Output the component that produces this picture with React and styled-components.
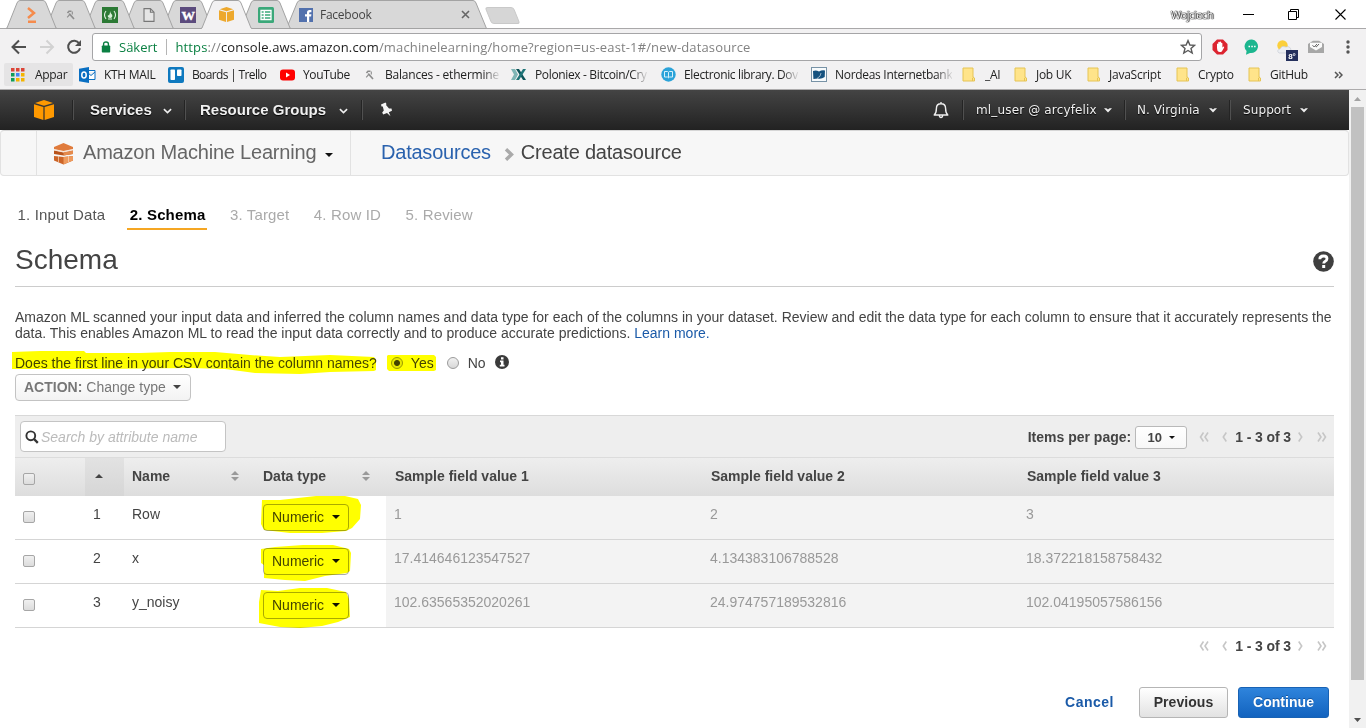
import React from "react";
import styled, { createGlobalStyle, css } from "styled-components";

const GlobalStyle = createGlobalStyle`
  * { box-sizing: border-box; }
  html, body { margin: 0; padding: 0; overflow: hidden; background: #fff; }
  body { font-family: "Liberation Sans", Arial, sans-serif; font-size: 14px; color: #444; }
`;

const uiFont = css`
  font-family: "Open Sans", "Noto Sans", sans-serif;
`;

const Screen = styled.div`
  width: 1366px;
  height: 728px;
  display: flex;
  flex-direction: column;
  overflow: hidden;
`;

/* ---------- Browser tab strip ---------- */
const TabStrip = styled.div`
  ${uiFont}
  height: 29px;
  flex: none;
  display: flex;
  align-items: flex-end;
  padding-left: 6px;
  background: #fff;
  box-shadow: inset 0 -1px #a9a8a9;
`;

const TabBox = styled.div`
  position: relative;
  z-index: ${(p) => (p.$active ? 10 : p.$z)};
  flex: none;
  width: ${(p) => p.$w}px;
  height: 29px;
  margin-right: -12px;
  display: flex;
  align-items: center;
  justify-content: center;
  font-size: 12px;
  color: #444;
`;

const WideTab = styled(TabBox)`
  margin: 0 0 0 7px;
  justify-content: flex-start;
  padding-left: 13px;
`;

const TabShape = styled.svg`
  position: absolute;
  inset: 0;
`;

const TabContent = styled.div`
  position: relative;
  display: flex;
  align-items: center;
  gap: 7px;
  width: ${(p) => (p.$wide ? "171px" : "auto")};
  height: 28px;
  letter-spacing: -0.25px;
`;

const TabClose = styled.svg`
  margin-left: auto;
`;

function Tab({ w = 51, active, z, children }) {
  return (
    <TabBox $w={w} $active={active} $z={z}>
      <TabShape width={w} height="29" viewBox={`0 0 ${w} 29`}>
        <path
          d={`M0 29 L1 28 L11 3 Q12 .5 14 .5 H${w - 14} Q${w - 12} .5 ${w - 11} 3 L${w - 1} 28 L${w} 29Z`}
          fill={active ? "#f2f1f2" : "#d8d8d8"}
        />
        <path
          d={`M0 28.5 L1 28 L11 3 Q12 .5 14 .5 H${w - 14} Q${w - 12} .5 ${w - 11} 3 L${w - 1} 28 L${w} 28.5${active ? "" : "Z"}`}
          fill="none"
          stroke="#a3a3a3"
        />
      </TabShape>
      <TabContent>{children}</TabContent>
    </TabBox>
  );
}

const NewTab = styled.div`
  width: 29px;
  height: 17px;
  margin: 0 0 5px 1px;
  background: #d6d6d6;
  border: 1px solid #c9c9c9;
  border-radius: 3px;
  transform: skewX(22deg);
`;

const WindowControls = styled.div`
  margin-left: auto;
  height: 28px;
  display: flex;
  align-items: center;
  padding: 0 20px 2px 0;
`;

const ProfileName = styled.span`
  font-size: 11px;
  letter-spacing: -0.45px;
  color: #fff;
  text-shadow: 0 0 1px #222, 0 0 1px #222, 0 0 1px #222, 1px 0 1px #444;
  margin-right: 30px;
`;

const ControlIcon = styled.svg`
  margin-right: ${(p) => p.$gap || 0}px;
`;

/* ---------- Toolbar ---------- */
const Toolbar = styled.div`
  ${uiFont}
  height: 34px;
  flex: none;
  display: flex;
  align-items: center;
  background: #f2f1f2;
  padding: 1px 0 0 10px;
`;

const NavIcons = styled.div`
  display: flex;
  width: 82px;
  gap: 10px;
  align-items: center;
`;

const Omnibox = styled.div`
  width: 1110px;
  height: 28px;
  border: 1px solid #a5a5a7;
  border-radius: 3px;
  background: #fff;
  display: flex;
  align-items: center;
  padding-left: 8px;
  font-size: 13px;
`;

const Secure = styled.span`
  color: #0b8043;
`;

const OmniDivider = styled.span`
  width: 1px;
  height: 16px;
  background: #b5b5b5;
  margin: 0 8px 0 9px;
`;

const Url = styled.span`
  color: #828282;
  letter-spacing: 0.145px;
  b { font-weight: 400; color: #1c1c1c; }
`;

const StarIcon = styled.svg`
  margin: 0 5px 0 auto;
`;

const Extensions = styled.div`
  display: flex;
  align-items: center;
  padding-left: 10px;
`;

const ExtIcon = styled.svg`
  margin-right: ${(p) => p.$gap}px;
`;

/* ---------- Bookmarks ---------- */
const Bookmarks = styled.div`
  ${uiFont}
  height: 27px;
  flex: none;
  background: #f2f1f2;
  border-bottom: 1px solid #adabac;
  display: flex;
  align-items: center;
  padding: 0 0 3px 4px;
  font-size: 12px;
  color: #222;
`;

const Bookmark = styled.div`
  flex: none;
  width: ${(p) => p.$w}px;
  height: 23px;
  display: flex;
  align-items: center;
`;

const AppsButton = styled(Bookmark)`
  background: #e5e4e5;
  padding-left: 7px;
  margin-right: 6px;
  border-radius: 2px;
`;

const BookmarkLabel = styled.span`
  margin-left: ${(p) => p.$gap ?? 8}px;
  white-space: nowrap;
  letter-spacing: ${(p) => p.$ls ?? -0.35}px;
  ${(p) => p.$fade && css`mask-image: linear-gradient(90deg, #000 86%, rgba(0, 0, 0, 0.1) 100%);`}
`;

/* ---------- Console frame ---------- */
const Viewport = styled.div`
  flex: 1;
  display: flex;
  min-height: 0;
`;

const Page = styled.div`
  width: 1349px;
  display: flex;
  flex-direction: column;
`;

const ScrollTrack = styled.div`
  width: 17px;
  background: #f1f1f1;
  display: flex;
  flex-direction: column;
  align-items: center;
`;

const ScrollButton = styled.div`
  height: 17px;
  display: flex;
  align-items: center;
  justify-content: center;
`;

const ScrollThumb = styled.div`
  width: 13px;
  height: 573px;
  background: #c1c1c1;
  margin-bottom: auto;
`;

const ConsoleBar = styled.header`
  height: 40px;
  flex: none;
  display: flex;
  align-items: center;
  background: linear-gradient(#444 0%, #222 100%);
  color: #f0f0f0;
`;

const NavDivider = styled.span`
  width: 2px;
  height: 20px;
  background: #242424;
  border-right: 1px solid #505050;
`;

const NavItem = styled.div`
  width: ${(p) => p.$w}px;
  padding-left: ${(p) => p.$pl}px;
  display: flex;
  align-items: center;
  gap: ${(p) => p.$gap}px;
  white-space: nowrap;
  text-shadow: 0 1px 1px #000;
  font: ${(p) => (p.$small ? '12px "DejaVu Sans", Verdana, sans-serif' : 'bold 15px "Liberation Sans", Arial, sans-serif')};
  letter-spacing: ${(p) => p.$ls || 0}px;
  margin-top: ${(p) => (p.$small ? 0 : -1)}px;
`;

const NavSpacer = styled.div`
  flex: 1;
`;

const ServiceBar = styled.nav`
  height: 46px;
  flex: none;
  display: flex;
  background: #f7f7f7;
  border: 1px solid #e2e2e2;
  border-top-color: #d6d6d6;
  border-radius: 4px;
  font-size: 20px;
  line-height: 43px;
`;

const ServiceGutter = styled.div`
  width: 36px;
  border-right: 1px solid #e2e2e2;
`;

const ServiceName = styled.div`
  width: 314px;
  border-right: 1px solid #e2e2e2;
  display: flex;
  align-items: center;
  color: #666;
  padding-left: 16px;
`;

const ServiceLabel = styled.span`
  margin: 0 9px 2px 9px;
  letter-spacing: -0.2px;
`;

const Crumbs = styled.div`
  display: flex;
  align-items: center;
  padding: 0 0 2px 30px;
  letter-spacing: -0.22px;
`;

const CrumbLink = styled.a`
  color: #2a62ae;
`;

const CrumbArrow = styled.svg`
  margin: 4px 6px 0 13px;
`;

/* ---------- Content ---------- */
const Content = styled.main`
  position: relative;
  flex: 1;
  padding: 29px 15px 0 15px;
  display: flex;
  flex-direction: column;
`;

const Steps = styled.div`
  display: flex;
  gap: 20px;
  height: 25px;
  font-size: 15px;
`;

const Step = styled.span`
  height: 25px;
  padding: 1px 2px 0 2.5px;
  letter-spacing: 0.15px;
  color: ${(p) => (p.$active ? "#000" : p.$done ? "#555" : "#aaa")};
  font-weight: ${(p) => (p.$active ? 700 : 400)};
  border-bottom: 2px solid ${(p) => (p.$active ? "#f5a623" : "transparent")};
`;

const TitleRow = styled.div`
  height: 57px;
  flex: none;
  display: flex;
  align-items: center;
  justify-content: space-between;
  border-bottom: 1px solid #ccc;
`;

const Title = styled.h1`
  margin: 3px 0 0;
  font-size: 28px;
  font-weight: 400;
  line-height: 32px;
`;

const HelpIcon = styled.svg`
  margin-top: 6px;
`;

const Intro = styled.p`
  margin: 22px -10px 0 0;
  line-height: 16px;
  white-space: nowrap;
  letter-spacing: 0.005px;
`;

const Link = styled.a`
  color: #1a5aa8;
`;

const Question = styled.div`
  display: flex;
  align-items: center;
  height: 16px;
  margin-top: 14px;
`;

const Radio = styled.span`
  width: 12px;
  height: 12px;
  border-radius: 50%;
  border: 1px solid #9b9b9b;
  background: ${(p) => (p.$on ? "radial-gradient(circle, #444 0 2.5px, #e8e8e8 3.5px)" : "linear-gradient(#f1f1f1, #d8d8d8)")};
  margin: 0 ${(p) => (p.$on ? 8 : 9)}px 0 ${(p) => (p.$on ? 14 : 13)}px;
`;

const InfoIcon = styled.svg`
  margin: -2px 0 0 9px;
`;

const ActionButton = styled.div`
  width: 176px;
  height: 27px;
  flex: none;
  margin-top: 3px;
  border: 1px solid #c3c3c3;
  border-radius: 4px;
  background: linear-gradient(#fff, #f3f3f3);
  color: #777;
  display: flex;
  align-items: center;
  padding: 0 0 2px 8px;
  gap: 4px;
  white-space: nowrap;
`;

const Caret = styled.span`
  width: 0;
  height: 0;
  border: ${(p) => p.$s || 4}px solid transparent;
  border-top-color: ${(p) => p.$c || "#111"};
  border-bottom: 0;
  margin-left: ${(p) => p.$ml || 0}px;
  margin-top: ${(p) => p.$mt || 0}px;
`;

const Grid = styled.section`
  margin-top: 14px;
  border-top: 1px solid #d8d8d8;
  width: 1319px;
`;

const GridToolbar = styled.div`
  height: 41px;
  background: #eee;
  display: flex;
  align-items: center;
  padding: 0 7px 0 5px;
  font-weight: 700;
`;

const Search = styled.div`
  width: 206px;
  height: 31px;
  border: 1px solid #c4c4c4;
  border-radius: 4px;
  background: #fff;
  display: flex;
  align-items: center;
  padding-left: 4px;
  gap: 2px;
  color: #bbb;
  font-weight: 400;
  font-style: italic;
  margin-right: auto;
`;

const PageSize = styled.div`
  width: 52px;
  height: 23px;
  margin: 1px 12px 0 4px;
  border: 1px solid #b9b9b9;
  border-radius: 3px;
  background: linear-gradient(#fff, #f7f7f7);
  display: flex;
  align-items: center;
  justify-content: center;
  gap: 7px;
  font-size: 13px;
`;

const Pager = styled.div`
  display: flex;
  align-items: center;
  justify-content: flex-end;
  font-weight: 700;
  color: #444;
  height: 18px;
  margin-top: ${(p) => p.$mt || 0}px;
  padding-right: ${(p) => p.$pr || 0}px;
`;

const PagerText = styled.span`
  margin: 0 7px 0 8px;
  letter-spacing: -0.1px;
`;

const rowGrid = css`
  display: grid;
  grid-template-columns: 70px 39px 131px 131px 1fr 1fr 1fr;
`;

const HeaderRow = styled.div`
  ${rowGrid}
  height: 39px;
  border-top: 1px solid #dcdcdc;
  background: linear-gradient(#eee, #ddd);
  font-weight: 700;
`;

const HeaderCell = styled.div`
  display: flex;
  align-items: center;
  justify-content: ${(p) => (p.$sort ? "space-between" : "flex-start")};
  padding: 0 ${(p) => (p.$sort ? "16px 2px 8px" : "8px 2px 9px")};
`;

const SortedCell = styled.div`
  background: linear-gradient(#e2e2e2, #d6d6d6);
  display: flex;
  align-items: center;
  padding: 0 0 2px 10px;
`;

const BodyRow = styled.div`
  ${rowGrid}
  height: 44px;
  border-bottom: 1px solid #d5d5d5;
  line-height: 16px;
`;

const Cell = styled.div`
  padding: 10px 0 0 8px;
  color: ${(p) => (p.$sample ? "#999" : "#444")};
  background: ${(p) => (p.$sample ? "#f3f3f3" : "transparent")};
`;

const CheckCell = styled.div`
  padding: 15px 0 0 8px;
`;

const Checkbox = styled.span`
  display: block;
  width: 12px;
  height: 12px;
  border: 1px solid #a6a6a6;
  border-radius: 2px;
  background: linear-gradient(#f0f0f0, #dcdcdc);
`;

const TypeSelect = styled.div`
  width: 86px;
  height: 27px;
  margin-top: -2px;
  border: 1px solid #aaa;
  border-radius: 4px;
  display: flex;
  align-items: center;
  padding: 0 0 1px 8px;
  gap: 8px;
`;

const Footer = styled.div`
  display: flex;
  justify-content: flex-end;
  align-items: center;
  margin-top: 32px;
  padding-right: 5px;
  font-weight: 700;
`;

const CancelLink = styled.a`
  color: #1a5aa8;
  letter-spacing: 0.5px;
  margin: 0 25px 2px 0;
`;

const Button = styled.div`
  width: ${(p) => p.$w}px;
  height: 31px;
  border-radius: 3px;
  display: flex;
  align-items: center;
  justify-content: center;
  padding-bottom: 1px;
  letter-spacing: 0.05px;
  ${(p) =>
    p.$primary
      ? css`
          margin-left: 10px;
          border: 1px solid #1862b4;
          background: linear-gradient(#2f84dc, #1263bf);
          color: #fff;
          text-shadow: 0 -1px #1556a0;
        `
      : css`
          border: 1px solid #b5b5b5;
          background: linear-gradient(#fff, #e2e2e2);
          color: #333;
        `}
`;

/* Marker strokes lie over the text like a real highlighter. */
const Highlights = styled.svg`
  position: absolute;
  left: 0;
  top: 0;
  mix-blend-mode: multiply;
  pointer-events: none;
`;

/* ---------- Icons ---------- */
const CubeIcon = ({ size = 16, color = "#f5a623" }) => (
  <svg width={size} height={size} viewBox="0 0 20 20">
    <path d="M1 3 L10 0 L19 3 L10 5.7Z" fill={color} />
    <path d="M0 4.2 L9.4 7 V20 L0 17Z M20 4.2 L10.6 7 V20 L20 17Z" fill={color} />
  </svg>
);

const PickIcon = () => (
  <svg width="10" height="10" viewBox="0 0 10 10" fill="none" stroke="#8d8d8d">
    <path d="M1.5 3 L3 1.2 H5.5" strokeWidth="1.6" />
    <path d="M3.2 3.6 L8 9" strokeWidth="1.6" />
    <path d="M6.3 1.4 V4.6 M1.2 7.4 L3.6 4.6" strokeWidth="1.1" />
  </svg>
);

const FolderIcon = () => (
  <svg width="14" height="15" viewBox="0 0 14 15">
    <path d="M1 1 H11 V10 L12.5 11 V14 H1Z" fill="#ffe48a" stroke="#e6c455" />
    <path d="M10.5 14 V11 L11.5 10.4" fill="none" stroke="#e6c455" />
  </svg>
);

const ChevronSvg = styled.svg`
  margin-top: 3px;
`;

const Chevron = () => (
  <ChevronSvg width="9" height="6" viewBox="0 0 10 6">
    <path d="M1 1 L5 4.7 L9 1" fill="none" stroke="#eee" strokeWidth="1.8" />
  </ChevronSvg>
);

const SmallCaret = () => (
  <svg width="8" height="5" viewBox="0 0 8 5">
    <path d="M0 .3 H2.4 L4 1.5 L5.6 .3 H8 L4 4.6Z" fill="#eee" />
  </svg>
);

const SortIcon = () => (
  <svg width="8" height="10" viewBox="0 0 8 10">
    <path d="M0 4 L4 0 L8 4Z M0 6 L4 10 L8 6Z" fill="#999" />
  </svg>
);

const Arrows = ({ double, right }) => (
  <svg
    width={double ? 10 : 5}
    height="10"
    viewBox={double ? "0 0 10 10" : "0 0 5 10"}
    fill="none"
    stroke="#c6c6c6"
    strokeWidth="1.6"
    transform={right ? "scale(-1 1)" : undefined}
  >
    <path d={double ? "M4.5 .5 L1.5 5 L4.5 9.5 M9 .5 L6 5 L9 9.5" : "M4.3 .5 L1.3 5 L4.3 9.5"} />
  </svg>
);

const PagerGap = styled.span`
  width: ${(p) => p.$w}px;
`;

function Pagination({ mt, pr }) {
  return (
    <Pager $mt={mt} $pr={pr}>
      <Arrows double />
      <PagerGap $w={13} />
      <Arrows />
      <PagerText>1 - 3 of 3</PagerText>
      <Arrows right />
      <PagerGap $w={14} />
      <Arrows double right />
    </Pager>
  );
}

const rows = [
  ["1", "Row", "1", "2", "3"],
  ["2", "x", "17.414646123547527", "4.134383106788528", "18.372218158758432"],
  ["3", "y_noisy", "102.63565352020261", "24.974757189532816", "102.04195057586156"],
];

const folders = [
  ["_AI", 52, 9, -0.3],
  ["Job UK", 73, 8, -0.3],
  ["JavaScript", 89, 8, -0.25],
  ["Crypto", 72, 8, -0.25],
  ["GitHub", 86, 8, -0.3],
];

const appColors = ["#db4437", "#db4437", "#db4437", "#0f9d58", "#4285f4", "#f4b400", "#0f9d58", "#f4b400", "#f4b400"];

function BrowserChrome() {
  return (
    <>
      <TabStrip>
        <Tab z={7}>
          <svg width="12" height="16" viewBox="0 0 12 16" fill="none" stroke="#f58b4c" strokeWidth="2.5">
            <path d="M2 1 L8 6 L2 11 M2 14.7 H10" />
          </svg>
        </Tab>
        <Tab z={6}><PickIcon /></Tab>
        <Tab z={5}>
          <svg width="16" height="16" viewBox="0 0 16 16">
            <rect width="16" height="16" fill="#2c7a35" />
            <path d="M4 4 Q1 8 4 12 M12 4 Q15 8 12 12 M6 12 H10" fill="none" stroke="#e4f3e5" strokeWidth="1.1" />
            <path d="M8 4 Q8.5 6.5 10.2 8 Q10.8 10.5 8.2 11 Q5 10.5 6 8 L7 8.4 Q8.3 6.5 8 4Z" fill="#d8efd9" />
          </svg>
        </Tab>
        <Tab z={4}>
          <svg width="12" height="14" viewBox="0 0 12 14" fill="#e5e5e5" stroke="#777" strokeWidth="1.1">
            <path d="M1 .6 H7.4 L11 4.2 V13.4 H1Z M7.4 .6 V4.2 H11" />
          </svg>
        </Tab>
        <Tab z={3}>
          <svg width="16" height="16" viewBox="0 0 16 16">
            <rect width="16" height="16" fill="#5b4b7d" />
            <text x="8" y="12.6" textAnchor="middle" fontFamily="Liberation Serif, serif" fontWeight="700" fontSize="13.5" fill="#fff" stroke="#fff" strokeWidth=".4">W</text>
          </svg>
        </Tab>
        <Tab z={2} active><CubeIcon size={15} color="#eda82c" /></Tab>
        <Tab z={1}>
          <svg width="16" height="16" viewBox="0 0 16 16">
            <rect width="16" height="16" rx="1.5" fill="#3aa879" />
            <path d="M3 3.5 H13 V12.5 H3Z M3 6.5 H13 M3 9.5 H13 M6.3 3.5 V12.5" fill="none" stroke="#fff" strokeWidth="1.3" />
          </svg>
        </Tab>
        <WideTab $w={201} $z={0}>
          <TabShape width="201" height="29" viewBox="0 0 201 29">
            <path d="M.5 28.5 L11 3 Q12 .5 14 .5 H187 Q189 .5 190 3 L200.5 28.5Z" fill="#d8d8d8" stroke="#a3a3a3" />
          </TabShape>
          <TabContent $wide>
            <svg width="14" height="14" viewBox="0 0 14 14">
              <rect width="14" height="14" fill="#5271ad" />
              <path d="M8 14 V8.6 H6 V6.2 H8 V4.6 Q8 2 10.5 2 H12.4 V4.2 H11 Q10.2 4.2 10.2 5 V6.2 H12.4 L12.1 8.6 H10.2 V14Z" fill="#fff" />
            </svg>
            Facebook
            <TabClose width="9" height="9" viewBox="0 0 9 9" stroke="#666" strokeWidth="1.6">
              <path d="M1 1 L8 8 M8 1 L1 8" />
            </TabClose>
          </TabContent>
        </WideTab>
        <NewTab />
        <WindowControls>
          <ProfileName>Wojciech</ProfileName>
          <ControlIcon $gap={34} width="11" height="11" viewBox="0 0 11 11" stroke="#000"><path d="M0 5.5 H11" /></ControlIcon>
          <ControlIcon $gap={36} width="11" height="11" viewBox="0 0 11 11" fill="none" stroke="#000">
            <path d="M.5 2.5 H8.5 V10.5 H.5Z M2.5 2.5 V.5 H10.5 V8.5 H8.5" />
          </ControlIcon>
          <ControlIcon width="11" height="11" viewBox="0 0 11 11" stroke="#000" strokeWidth="1.1"><path d="M.5 .5 L10.5 10.5 M10.5 .5 L.5 10.5" /></ControlIcon>
        </WindowControls>
      </TabStrip>

      <Toolbar>
        <NavIcons>
          <svg width="18" height="16" viewBox="0 0 18 16" fill="none" stroke="#4f4f4f" strokeWidth="2"><path d="M16 8 H3 M9 1.5 L2.5 8 L9 14.5" /></svg>
          <svg width="18" height="16" viewBox="0 0 18 16" fill="none" stroke="#d2d2d2" strokeWidth="2"><path d="M2 8 H14 M8.5 1.5 L15 8 L8.5 14.5" /></svg>
          <svg width="16" height="16" viewBox="0 0 16 16"><path d="M13.2 4.5 A6 6 0 1 0 14 9.2" fill="none" stroke="#4f4f4f" strokeWidth="2" /><path d="M15 1 V7 H9Z" fill="#4f4f4f" /></svg>
        </NavIcons>
        <Omnibox>
          <svg width="10" height="12" viewBox="0 0 10 12">
            <rect x=".8" y="4.5" width="8.4" height="7" rx=".8" fill="#0b8043" />
            <path d="M2.6 5 V3 Q2.6 1 5 1 Q7.4 1 7.4 3 V5" fill="none" stroke="#0b8043" strokeWidth="1.4" />
          </svg>
          <PagerGap $w={8} />
          <Secure>Säkert</Secure>
          <OmniDivider />
          <Url><Secure>https</Secure>://<b>console.aws.amazon.com</b>/machinelearning/home?region=us-east-1#/new-datasource</Url>
          <StarIcon width="16" height="16" viewBox="0 0 16 16" fill="none" stroke="#5a5a5a" strokeWidth="1.4">
            <path d="M8 1.6 L9.9 6 L14.6 6.3 L11 9.4 L12.2 14 L8 11.5 L3.8 14 L5 9.4 L1.4 6.3 L6.1 6Z" />
          </StarIcon>
        </Omnibox>
        <Extensions>
          <ExtIcon $gap={16} width="16" height="16" viewBox="0 0 16 16">
            <path d="M5 .5 H11 L15.5 5 V11 L11 15.5 H5 L.5 11 V5Z" fill="#dc2430" />
            <path d="M5 9 V5 Q5.6 4 6.2 5 V3.4 Q7 2.3 7.7 3.4 V2.8 Q8.5 2 9.1 3 V4 Q10 3.2 10.4 4.4 V8.6 L11.6 7.6 Q12.6 7.7 12 8.8 L9.8 12.6 Q7 14 5.4 11.5Z" fill="#fff" />
          </ExtIcon>
          <ExtIcon $gap={16} width="16" height="16" viewBox="0 0 16 16">
            <path d="M8 .5 A7 6.8 0 1 1 6 14 L2 15.8 L2.6 12 A7 6.8 0 0 1 8 .5Z" fill="#1cb68f" />
            <path d="M4.5 7.5 H6 M7.3 7.5 H8.8 M10.1 7.5 H11.6" stroke="#fff" strokeWidth="1.4" />
          </ExtIcon>
          <ExtIcon $gap={10} width="22" height="28" viewBox="0 0 22 28">
            <circle cx="6.5" cy="12.5" r="5.2" fill="#fbcf3b" />
            <path d="M3 20 Q0 17.5 4 15.8 Q6 12 10 14 Q14 12.5 15 17 V20Z" fill="#eceef2" stroke="#c3c8d0" strokeWidth=".6" />
            <rect x="10" y="17" width="12" height="11" fill="#25305d" />
            <text x="16" y="25.5" textAnchor="middle" fontSize="8" fontWeight="700" fill="#fff" fontFamily="Liberation Sans, sans-serif">8°</text>
          </ExtIcon>
          <ExtIcon $gap={22} width="16" height="14" viewBox="0 0 16 14">
            <path d="M0 4 L5 .7 H11 L16 4 V13 H0Z" fill="#a7a7a7" />
            <path d="M2 2.8 H14 V7 L8 10.5 L2 7Z" fill="#fafafa" />
            <path d="M4.5 5.2 L6.2 7 L9 4 M7.6 6.6 L8.2 7 L11 4" fill="none" stroke="#666" strokeWidth="1" />
          </ExtIcon>
          <svg width="4" height="14" viewBox="0 0 4 14" fill="#555"><circle cx="2" cy="2" r="1.7" /><circle cx="2" cy="7" r="1.7" /><circle cx="2" cy="12" r="1.7" /></svg>
        </Extensions>
      </Toolbar>

      <Bookmarks>
        <AppsButton $w={69}>
          <svg width="14" height="14" viewBox="0 0 14 14">
            {appColors.map((c, i) => <rect key={i} x={(i % 3) * 5} y={Math.floor(i / 3) * 5} width="3.5" height="3.5" fill={c} />)}
          </svg>
          <BookmarkLabel $gap={10} $ls={-0.3}>Appar</BookmarkLabel>
        </AppsButton>
        <Bookmark $w={89}>
          <svg width="17" height="16" viewBox="0 0 17 16">
            <path d="M8 3.5 H16 V12.5 H8Z M8 5 L12 8.5 L16 5" fill="#fff" stroke="#0a6fc2" />
            <path d="M0 1.8 L10 0 V16 L0 14.2Z" fill="#0a6fc2" />
            <ellipse cx="5" cy="8" rx="2.2" ry="3" fill="none" stroke="#fff" strokeWidth="1.5" />
          </svg>
          <BookmarkLabel $ls={-0.3}>KTH MAIL</BookmarkLabel>
        </Bookmark>
        <Bookmark $w={112}>
          <svg width="16" height="16" viewBox="0 0 16 16">
            <rect width="16" height="16" rx="2" fill="#0f79bf" />
            <rect x="2.5" y="2.5" width="4.5" height="10.5" rx=".8" fill="#fff" /><rect x="9" y="2.5" width="4.5" height="6.5" rx=".8" fill="#fff" />
          </svg>
          <BookmarkLabel $ls={-0.65}>Boards | Trello</BookmarkLabel>
        </Bookmark>
        <Bookmark $w={85}>
          <svg width="15" height="12" viewBox="0 0 15 12"><rect y=".5" width="15" height="11" rx="3" fill="#f00" /><path d="M6 3.6 L10 6 L6 8.4Z" fill="#fff" /></svg>
          <BookmarkLabel $ls={-0.35}>YouTube</BookmarkLabel>
        </Bookmark>
        <Bookmark $w={146}>
          <PickIcon />
          <BookmarkLabel $gap={10} $fade $ls={-0.2}>Balances - ethermine</BookmarkLabel>
        </Bookmark>
        <Bookmark $w={150}>
          <svg width="16" height="13" viewBox="0 0 16 13">
            <path d="M0 1 H4 L7 6.5 L4 12 H0 L3 6.5Z" fill="#7fb5b5" />
            <path d="M5 1 H8 L15 12 H12Z" fill="#0e5358" /><path d="M12 1 H15 L8 12 H5Z" fill="#1f7478" />
          </svg>
          <BookmarkLabel $fade>Poloniex - Bitcoin/Cry</BookmarkLabel>
        </Bookmark>
        <Bookmark $w={150}>
          <svg width="15" height="15" viewBox="0 0 15 15"><circle cx="7.5" cy="7.5" r="7.2" fill="#2ba3d9" /><path d="M3.5 4.5 H6.5 L7.5 5.3 L8.5 4.5 H11.5 V10 H8.5 L7.5 10.8 L6.5 10 H3.5Z M7.5 5.3 V10.8" fill="none" stroke="#d6f1fb" /></svg>
          <BookmarkLabel $fade>Electronic library. Dov</BookmarkLabel>
        </Bookmark>
        <Bookmark $w={151}>
          <svg width="16" height="15" viewBox="0 0 16 15"><rect x=".5" y=".5" width="15" height="14" fill="#f7fafc" stroke="#7892a6" /><path d="M2 4 Q5 2.7 8 4.5 Q11 2.8 14 3.5 L13.7 10 Q10 12.5 7 11.5 L2.4 12Z" fill="#14517f" /><path d="M6 11.5 Q10 9.5 10 6" fill="none" stroke="#c8d9e5" strokeWidth=".7" /></svg>
          <BookmarkLabel $fade $ls={-0.3}>Nordeas Internetbank</BookmarkLabel>
        </Bookmark>
        {folders.map(([name, w, gap, ls]) => (
          <Bookmark key={name} $w={w}>
            <FolderIcon />
            <BookmarkLabel $gap={gap} $ls={ls}>{name}</BookmarkLabel>
          </Bookmark>
        ))}
        <svg width="9" height="8" viewBox="0 0 9 8" fill="none" stroke="#555" strokeWidth="1.5"><path d="M1 1 L4 4 L1 7 M5 1 L8 4 L5 7" /></svg>
      </Bookmarks>
    </>
  );
}

function ConsoleHeader() {
  return (
    <>
      <ConsoleBar>
        <NavItem $w={72} $pl={34}><CubeIcon size={20} color="#ff9900" /></NavItem>
        <NavDivider />
        <NavItem $w={110} $pl={16} $gap={11}>Services<Chevron /></NavItem>
        <NavDivider />
        <NavItem $w={175} $pl={14} $gap={13} $ls={0.02}>Resource Groups<Chevron /></NavItem>
        <NavDivider />
        <NavItem $w={47} $pl={16}>
          <svg width="14" height="15" viewBox="0 0 14 15"><path d="M2 2.5 L6.5 .5 L7.5 2 L7 3 L10 6.5 L12.5 6.5 L13 8.8 L9.8 10.3 L11.5 14.3 L8 11 L4.2 12.5 L3.2 10.5 L4.8 8.6 L3.8 4.6 L2.5 4.4Z" fill="#f4f4f4" /></svg>
        </NavItem>
        <NavSpacer />
        <NavItem $w={30} $pl={0}>
          <svg width="18" height="18" viewBox="0 0 18 18" fill="none" stroke="#eee" strokeWidth="1.4" strokeLinejoin="round">
            <path d="M9 1 V2.5 M2.2 14 Q4.4 12 4.4 7.5 Q4.4 2.8 9 2.8 Q13.6 2.8 13.6 7.5 Q13.6 12 15.8 14Z M7.3 14.3 Q7.5 16.5 9 16.5 Q10.5 16.5 10.7 14.3" />
          </svg>
        </NavItem>
        <NavDivider />
        <NavItem $small $w={160} $pl={12} $gap={7} $ls={0.15}>ml_user @ arcyfelix<SmallCaret /></NavItem>
        <NavDivider />
        <NavItem $small $w={103} $pl={11} $gap={9} $ls={0.08}>N. Virginia<SmallCaret /></NavItem>
        <NavDivider />
        <NavItem $small $w={118} $pl={12} $gap={9} $ls={0.1}>Support<SmallCaret /></NavItem>
      </ConsoleBar>
      <ServiceBar>
        <ServiceGutter />
        <ServiceName>
          <svg width="21" height="23" viewBox="0 0 21 23">
            <path d="M1 5 L10.5 1 L20 5 V7 L10.5 9 L1 7Z" fill="#e07b3c" />
            <path d="M1 8.5 L10.5 10.5 L20 8.5 V12 L10.5 13.5 L1 12Z" fill="#b9541c" />
            <path d="M10.5 10.5 L20 8.5 V12 L10.5 13.5Z" fill="#e58a4c" />
            <path d="M1 14 L10.5 15 L20 14 V18.5 L10.5 22.5 L1 18.5Z" fill="#cc6427" />
            <path d="M10.5 15 L20 14 V18.5 L10.5 22.5Z" fill="#ee9a5c" />
            <path d="M5.5 14 V20.5 M15.5 14 V20.5 M1 7.8 L10.5 9.8 L20 7.8" fill="none" stroke="#f8d7bf" strokeWidth=".7" />
          </svg>
          <ServiceLabel>Amazon Machine Learning</ServiceLabel>
          <Caret $mt={4} />
        </ServiceName>
        <Crumbs>
          <CrumbLink>Datasources</CrumbLink>
          <CrumbArrow width="11" height="13" viewBox="0 0 11 13" fill="none" stroke="#aaa" strokeWidth="3.4"><path d="M2 1.2 L7.5 6.5 L2 11.8" /></CrumbArrow>
          <span>Create datasource</span>
        </Crumbs>
      </ServiceBar>
    </>
  );
}

export default function App() {
  return (
    <Screen>
      <GlobalStyle />
      <BrowserChrome />
      <Viewport>
        <Page>
          <ConsoleHeader />
          <Content>
            <Steps>
              <Step $done>1. Input Data</Step>
              <Step $active>2. Schema</Step>
              <Step>3. Target</Step>
              <Step>4. Row ID</Step>
              <Step>5. Review</Step>
            </Steps>
            <TitleRow>
              <Title>Schema</Title>
              <HelpIcon width="21" height="21" viewBox="0 0 21 21">
                <circle cx="10.5" cy="10.5" r="10.3" fill="#3f3f3f" />
                <path d="M6.8 8.2 Q6.8 5 10.5 5 Q14 5 14 7.8 Q14 9.4 12 10.4 Q10.7 11.2 10.7 12.6" fill="none" stroke="#fff" strokeWidth="2.8" />
                <rect x="9.2" y="14" width="3" height="3" fill="#fff" />
              </HelpIcon>
            </TitleRow>
            <Intro>
              Amazon ML scanned your input data and inferred the column names and data type for each of the columns in your dataset. Review and edit the data type for each column to ensure that it accurately represents the
              <br />
              data. This enables Amazon ML to read the input data correctly and to produce accurate predictions. <Link>Learn more.</Link>
            </Intro>
            <Question>
              Does the first line in your CSV contain the column names?
              <Radio $on />
              Yes
              <Radio />
              No
              <InfoIcon width="14" height="14" viewBox="0 0 14 14">
                <circle cx="7" cy="7" r="7" fill="#3a3a3a" />
                <path d="M6 2.3 H8.5 V4.5 H6Z M5 5.6 H8.5 V9.8 H9.5 V11.4 H4.8 V9.8 H6 V7.2 H5Z" fill="#fff" />
              </InfoIcon>
            </Question>
            <ActionButton>
              <b>ACTION:</b> Change type <Caret $c="#444" $ml={3} />
            </ActionButton>

            <Grid>
              <GridToolbar>
                <Search>
                  <svg width="14" height="14" viewBox="0 0 14 14" fill="none" stroke="#333"><circle cx="5.8" cy="5.8" r="4.4" strokeWidth="1.9" /><path d="M9 9 L12.8 12.8" strokeWidth="2.4" /></svg>
                  Search by attribute name
                </Search>
                Items per page:
                <PageSize>10 <Caret $s={3} /></PageSize>
                <Pagination />
              </GridToolbar>
              <HeaderRow>
                <CheckCell><Checkbox /></CheckCell>
                <SortedCell>
                  <svg width="8" height="4" viewBox="0 0 8 4"><path d="M0 4 L4 0 L8 4Z" fill="#444" /></svg>
                </SortedCell>
                <HeaderCell $sort>Name<SortIcon /></HeaderCell>
                <HeaderCell $sort>Data type<SortIcon /></HeaderCell>
                <HeaderCell>Sample field value 1</HeaderCell>
                <HeaderCell>Sample field value 2</HeaderCell>
                <HeaderCell>Sample field value 3</HeaderCell>
              </HeaderRow>
              {rows.map(([n, name, a, b, c]) => (
                <BodyRow key={n}>
                  <CheckCell><Checkbox /></CheckCell>
                  <Cell>{n}</Cell>
                  <Cell>{name}</Cell>
                  <Cell><TypeSelect>Numeric <Caret /></TypeSelect></Cell>
                  <Cell $sample>{a}</Cell>
                  <Cell $sample>{b}</Cell>
                  <Cell $sample>{c}</Cell>
                </BodyRow>
              ))}
            </Grid>
            <Pagination mt={9} pr={7} />
            <Footer>
              <CancelLink>Cancel</CancelLink>
              <Button $w={89}>Previous</Button>
              <Button $w={91} $primary>Continue</Button>
            </Footer>
            <Highlights width="1349" height="552" viewBox="0 176 1349 552" fill="#ff0">
              <path d="M12 352 L40 351 L84 351 L86 353 L140 353 L170 352 L215 352 L250 355 L280 357 L330 355 L374 357 L376 360 V370 L374 371 L330 372 L300 374 L255 373 L225 369 L190 368 L100 369 L12 369Z" />
              <path d="M387 356 L388 355 H434 L436 357 V370 L434 371 H389 L387 369Z" />
              <path d="M262 500 L280 500 L316 496 L345 496 L358 499 L361 505 L360 519 L352 528 L346 531 L322 533 L290 533 L264 530 L261 524Z" />
              <path d="M261 549 L275 547 L303 545 L333 545 L349 549 L351 553 L350 571 L347 573 L325 576 L305 581 L285 580 L264 578 L264 565 L261 563Z" />
              <path d="M261 590 L278 591 L300 588 L327 588 L346 592 L349 599 L350 617 L338 622 L322 626 L300 628 L280 627 L259 623 L259 602Z" />
            </Highlights>
          </Content>
        </Page>
        <ScrollTrack>
          <ScrollButton><svg width="7" height="4" viewBox="0 0 7 4"><path d="M0 4 L3.5 0 L7 4Z" fill="#a3a3a3" /></svg></ScrollButton>
          <ScrollThumb />
          <ScrollButton><svg width="7" height="4" viewBox="0 0 7 4"><path d="M0 0 L3.5 4 L7 0Z" fill="#505050" /></svg></ScrollButton>
        </ScrollTrack>
      </Viewport>
    </Screen>
  );
}
